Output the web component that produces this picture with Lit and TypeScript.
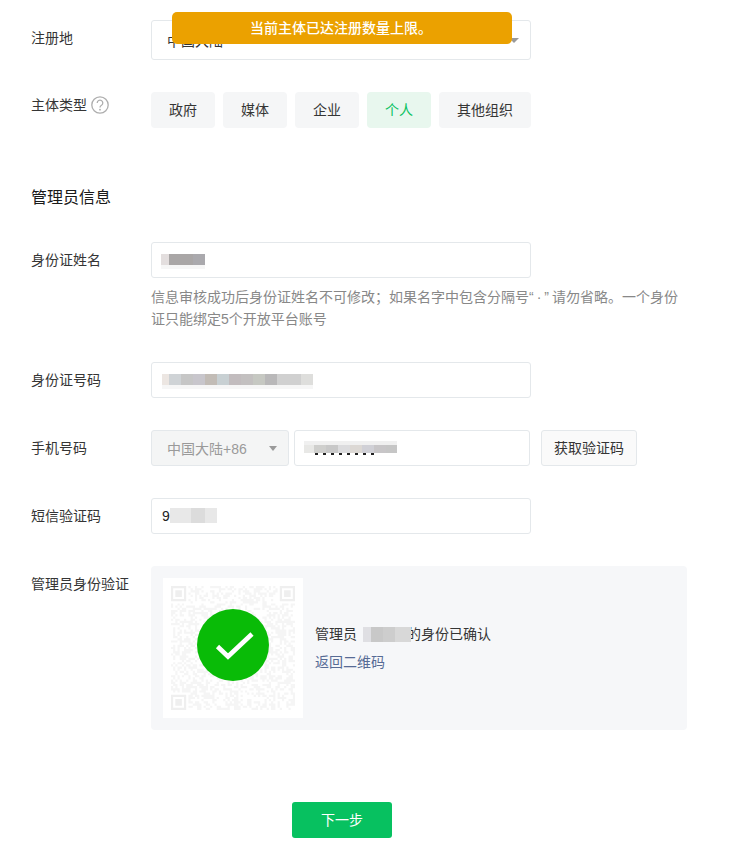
import { LitElement, html, css, svg } from 'lit';
import { customElement } from 'lit/decorators.js';

type Block = [width: number, color: string];

const ID_BLOCKS: Block[] = [
  [7, '#ece6e2'], [12, '#cfd3d6'], [12, '#c6c6c6'], [12, '#c8c6cc'], [12, '#c2bcb6'], [12, '#c8d0d3'],
  [12, '#c2bcbe'], [12, '#c3c0c0'], [12, '#c6c8c2'], [12, '#b9b8b9'], [24, '#d0d0d0'], [12, '#dededc'],
];
const NAME_BLOCKS: Block[] = [[8, '#e3dede'], [24, '#a9a6a6'], [12, '#aaa9ad']];
const PHONE_BLOCKS: Block[] = [
  [10, '#e8e8e6'], [12, '#cfcfcd'], [12, '#c8c8c8'], [12, '#dcdcde'], [12, '#dcd8d4'], [12, '#d0d0d6'], [12, '#c8c6c8'], [11, '#c6c6c6'],
];
const SMS_BLOCKS: Block[] = [[21, '#e8e8e8'], [14, '#dcdcdc'], [12, '#e8e8e8']];
const ADMIN_BLOCKS: Block[] = [[8, '#dfdfe3'], [12, '#c8c8c8'], [12, '#cdcdcd'], [16, '#d8d8d8']];

const CHIPS = ['政府', '媒体', '企业', '个人', '其他组织'];

// 固定种子，二维码图案每次都一样
function qrPath(size: number) {
  let seed = 20240;
  const next = () => {
    seed = (seed * 1103515245 + 12345) & 0x7fffffff;
    return (seed >> 12) % 100;
  };
  const inFinder = (x: number, y: number) =>
    (x < 8 && y < 8) || (x >= size - 8 && y < 8) || (x < 8 && y >= size - 8);
  let d = '';
  for (let y = 0; y < size; y++) {
    for (let x = 0; x < size; x++) {
      if (!inFinder(x, y) && next() < 48) d += `M${x} ${y}h1v1h-1z`;
    }
  }
  return d;
}

function finderPath(size: number) {
  let d = '';
  for (const [fx, fy] of [[0, 0], [size - 7, 0], [0, size - 7]]) {
    d += `M${fx} ${fy}h7v7h-7zM${fx + 1} ${fy + 1}v5h5v-5zM${fx + 2} ${fy + 2}h3v3h-3z`;
  }
  return d;
}

const QR_D = qrPath(57);
const FINDER_D = finderPath(57);

@customElement('app-root')
export class AppRoot extends LitElement {
  static styles = css`
    :host {
      display: block;
      position: relative;
      height: 866px;
      overflow: hidden;
      background: #fff;
      color: #353535;
      font-family: "Liberation Sans", "Noto Sans CJK SC", sans-serif;
      font-size: 14px;
    }

    .page {
      display: flex;
      flex-direction: column;
      gap: 32px;
      padding: 20px 0 0 31px;
    }

    .row {
      display: grid;
      grid-template-columns: 120px 1fr;
      align-items: start;
    }

    .label {
      line-height: 36px;
      white-space: nowrap;
    }

    .label.tight {
      display: flex;
      align-items: center;
      gap: 4px;
      line-height: 26px;
    }

    .help-icon {
      width: 18px;
      height: 18px;
      display: block;
    }

    .input {
      box-sizing: border-box;
      display: flex;
      align-items: center;
      width: 380px;
      height: 36px;
      padding: 0 12px;
      border: 1px solid #e4e8eb;
      border-radius: 3px;
      background: #fff;
    }

    .input.tall {
      position: relative;
      height: 40px;
      padding: 0 15px;
    }

    .arrow {
      width: 0;
      height: 0;
      border-left: 5px solid transparent;
      border-right: 5px solid transparent;
      border-top: 5px solid #9a9a9a;
    }

    .input.tall .arrow {
      position: absolute;
      right: 11px;
      top: 17px;
    }

    .toast {
      position: absolute;
      left: 172px;
      top: 12px;
      width: 340px;
      height: 32px;
      border-radius: 5px;
      background: #eba100;
      color: #fff;
      font-weight: 500;
      line-height: 32px;
      text-align: center;
      text-indent: -2px;
    }

    .chips {
      display: flex;
      gap: 8px;
    }

    .chip {
      min-width: 64px;
      height: 36px;
      padding: 0 18px;
      box-sizing: border-box;
      border-radius: 4px;
      background: #f5f6f7;
      line-height: 36px;
      text-align: center;
    }

    .chip.active {
      background: #e8f7ee;
      color: #07c160;
    }

    .section-title {
      margin-top: 26px;
      font-size: 16px;
      line-height: 24px;
      color: #1a1a1a;
    }

    .hint {
      width: 536px;
      margin-top: 8px;
      color: #888;
      line-height: 22px;
      white-space: nowrap;
    }

    .hint .sep {
      letter-spacing: 3px;
    }

    .censor {
      display: flex;
      height: 11px;
      margin-bottom: 2px;
      box-shadow: 0 4px 0 #f6f6f6;
    }

    .censor.id-no {
      margin-left: -2px;
    }

    .censor.name {
      margin-left: -3px;
    }

    .phone {
      display: flex;
    }

    .select {
      box-sizing: border-box;
      display: flex;
      align-items: center;
      justify-content: space-between;
      width: 138px;
      height: 36px;
      padding: 0 11px 0 15px;
      border: 1px solid #e4e8eb;
      border-radius: 3px;
      background: #f4f5f5;
      color: #9a9a9a;
    }

    .select .arrow {
      border-left-width: 4px;
      border-right-width: 4px;
    }

    .phone .input {
      width: 236px;
      margin-left: 5px;
    }

    .phone-mask {
      position: relative;
      margin: 4px 0 0 -3px;
    }

    .phone-mask .censor {
      height: 8px;
      margin-bottom: 0;
      box-shadow: 0 -4px 0 #f0f0f0;
    }

    .phone-mask .digits {
      height: 2px;
      margin-left: 11px;
      width: 64px;
      background: repeating-linear-gradient(90deg, #222 0 3px, transparent 3px 8px);
    }

    .send {
      box-sizing: border-box;
      width: 96px;
      height: 36px;
      margin-left: 11px;
      border: 1px solid #e4e8eb;
      border-radius: 3px;
      background: #fafafa;
      line-height: 34px;
      text-align: center;
    }

    .sms-code {
      display: flex;
      align-items: center;
      padding-left: 10px;
      color: #222;
    }

    .sms-code .censor {
      box-shadow: none;
      height: 15px;
    }

    .verify {
      display: flex;
      align-items: center;
      gap: 12px;
      width: 536px;
      height: 164px;
      padding: 0 12px;
      box-sizing: border-box;
      border-radius: 4px;
      background: #f6f7f9;
    }

    .qr {
      position: relative;
      display: flex;
      align-items: center;
      justify-content: center;
      flex: none;
      width: 140px;
      height: 140px;
      background: #fff;
    }

    .qr-code {
      width: 124px;
      height: 124px;
      display: block;
    }

    .check {
      position: absolute;
      left: 34px;
      top: 31px;
      width: 72px;
      height: 72px;
    }

    .verify-text {
      display: flex;
      flex-direction: column;
      gap: 6px;
      line-height: 22px;
    }

    .confirmed {
      display: flex;
      align-items: center;
    }

    .confirmed .censor {
      position: relative;
      height: 15px;
      margin: 0 -4px 0 6px;
      box-shadow: none;
    }

    .confirmed .rest {
      white-space: nowrap;
    }

    .back {
      color: #576b95;
    }

    .actions {
      display: flex;
      padding-left: 261px;
      margin-top: 40px;
    }

    .next {
      width: 100px;
      height: 36px;
      border-radius: 3px;
      background: #07c160;
      color: #fff;
      line-height: 36px;
      text-align: center;
    }
  `;

  private renderBlocks(blocks: Block[], cls = '') {
    return html`<div class="censor ${cls}">
      ${blocks.map(([w, c]) => html`<span style="width:${w}px;background:${c}"></span>`)}
    </div>`;
  }

  render() {
    return html`
      <div class="page">
        <div class="row">
          <div class="label">注册地</div>
          <div class="input tall">中国大陆<span class="arrow"></span></div>
        </div>

        <div class="row">
          <div class="label tight">
            主体类型
            <svg class="help-icon" viewBox="0 0 18 18" fill="none">
              <circle cx="9" cy="9" r="8.2" stroke="#aeaeae" stroke-width="1.3"></circle>
              <path d="M6.2 6.9a2.8 2.8 0 1 1 4.3 2.4c-1 .6-1.5 1.1-1.5 2.3" stroke="#aeaeae" stroke-width="1.3"></path>
              <circle cx="9" cy="13.7" r=".9" fill="#aeaeae"></circle>
            </svg>
          </div>
          <div class="chips">
            ${CHIPS.map((c) => html`<div class="chip ${c === '个人' ? 'active' : ''}">${c}</div>`)}
          </div>
        </div>

        <div class="section-title">管理员信息</div>

        <div class="row">
          <div class="label">身份证姓名</div>
          <div>
            <div class="input">${this.renderBlocks(NAME_BLOCKS, 'name')}</div>
            <div class="hint">信息审核成功后身份证姓名不可修改；如果名字中包含分隔号<span class="sep">“·”</span>请勿省略。一个身份<br />证只能绑定5个开放平台账号</div>
          </div>
        </div>

        <div class="row">
          <div class="label">身份证号码</div>
          <div class="input">${this.renderBlocks(ID_BLOCKS, 'id-no')}</div>
        </div>

        <div class="row">
          <div class="label">手机号码</div>
          <div class="phone">
            <div class="select">中国大陆+86<span class="arrow"></span></div>
            <div class="input">
              <div class="phone-mask">
                ${this.renderBlocks(PHONE_BLOCKS)}
                <div class="digits"></div>
              </div>
            </div>
            <div class="send">获取验证码</div>
          </div>
        </div>

        <div class="row">
          <div class="label">短信验证码</div>
          <div class="input sms-code">9${this.renderBlocks(SMS_BLOCKS)}</div>
        </div>

        <div class="row">
          <div class="label">管理员身份验证</div>
          <div class="verify">
            <div class="qr">
              <svg class="qr-code" viewBox="0 0 57 57">
                ${svg`<path d=${QR_D} fill="#f5f5f5"></path>`}
                ${svg`<path d=${FINDER_D} fill="#efefef" fill-rule="evenodd"></path>`}
              </svg>
              <svg class="check" viewBox="0 0 72 72">
                <circle cx="36" cy="36" r="36" fill="#09bb07"></circle>
                <path d="M20.5 37.5L31 47.5L55 25" fill="none" stroke="#fff" stroke-width="4.6"></path>
              </svg>
            </div>
            <div class="verify-text">
              <div class="confirmed">
                管理员${this.renderBlocks(ADMIN_BLOCKS)}<span class="rest">的身份已确认</span>
              </div>
              <div class="back">返回二维码</div>
            </div>
          </div>
        </div>

        <div class="actions"><div class="next">下一步</div></div>
      </div>

      <div class="toast">当前主体已达注册数量上限。</div>
    `;
  }
}
